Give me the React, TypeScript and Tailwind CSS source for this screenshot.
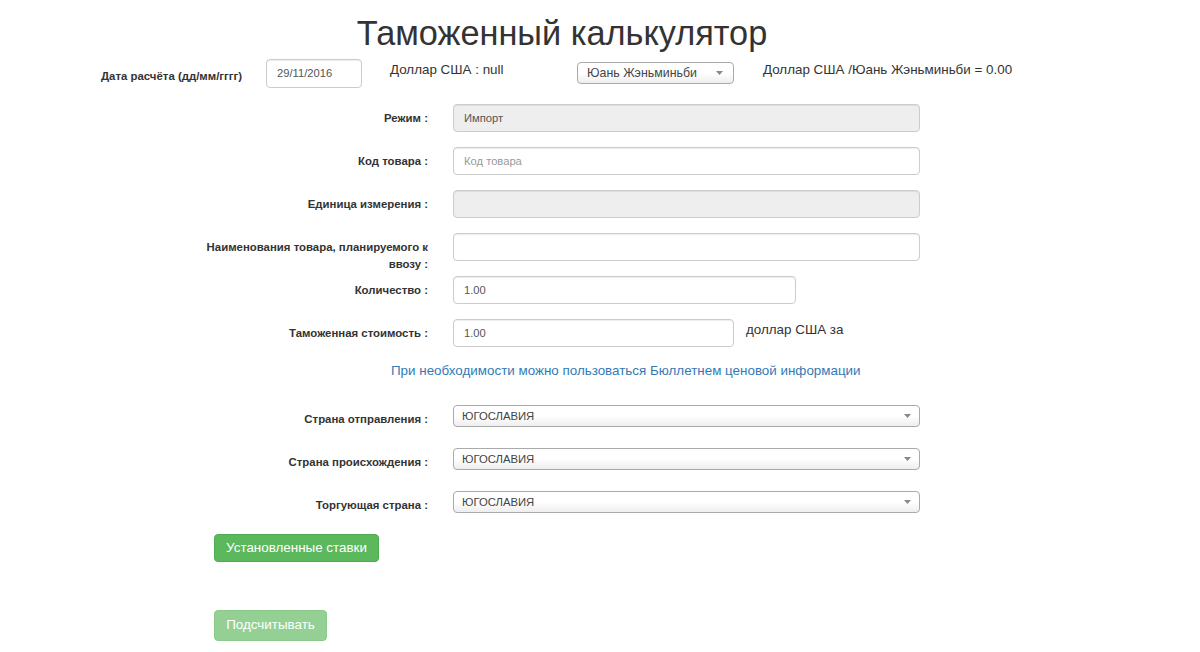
import React from 'react';

const Arrow = () => (
  <svg width="7" height="4" viewBox="0 0 7 4" className="shrink-0">
    <polygon points="0,0 7,0 3.5,4" fill="#888" />
  </svg>
);

const Field = ({ value = '', placeholder = '', disabled = false, className = '' }: any) => (
  <div
    className={`flex h-[28px] items-center rounded-[4px] border border-[#ccc] px-[10px] text-[11.2px] shadow-[inset_0_1px_1px_rgba(0,0,0,0.075)] ${
      disabled ? 'bg-[#eee]' : 'bg-white'
    } ${className}`}
  >
    {value ? <span className="text-[#555]">{value}</span> : <span className="text-[#999]">{placeholder}</span>}
  </div>
);

const Dropdown = ({ value, className = '' }: any) => (
  <div
    className={`flex h-[22px] items-center justify-between rounded-[4px] border border-[#aaa] bg-linear-to-b from-white from-50% to-[#eeeeee] pl-[8px] pr-[8px] text-[#444] ${className}`}
  >
    <span>{value}</span>
    <Arrow />
  </div>
);

const Row = ({ label, children, className = '' }: any) => (
  <div className={`flex items-start ${className}`}>
    <div className="ml-[198px] w-[230px] whitespace-nowrap pt-[6px] text-right text-[11.4px] font-bold leading-[17px] text-[#333]">
      {label}
    </div>
    <div className="ml-[25px] flex items-start">{children}</div>
  </div>
);

export default function App() {
  return (
    <div className="min-h-[652px] bg-white font-['Liberation_Sans',Arial,sans-serif] text-[#333]">
      <h1 className="w-[1124px] pt-[13px] text-center text-[34.3px] leading-[40px] font-normal text-[#333]">
        Таможенный калькулятор
      </h1>

      <div className="mt-[6px] flex items-start">
        <div className="ml-[101px] w-[165px] pt-[9px] text-[11.4px] font-bold leading-[17px]">
          Дата расчёта (дд/мм/гггг)
        </div>
        <Field value="29/11/2016" className="h-[29px] w-[96px]" />
        <div className="ml-[28px] w-[187px] pt-[1px] text-[13.4px] leading-[20px]">Доллар США : null</div>
        <Dropdown value="Юань Жэньминьби" className="mt-[3px] w-[157px] pl-[9px] pr-[10px] text-[12.4px]" />
        <div className="ml-[29px] pt-[1px] text-[13.4px] leading-[20px]">Доллар США /Юань Жэньминьби = 0.00</div>
      </div>

      <div className="mt-[16px] flex flex-col">
        <Row label="Режим :" className="mb-[15px]">
          <Field value="Импорт" disabled className="w-[467px]" />
        </Row>
        <Row label="Код товара :" className="mb-[15px]">
          <Field placeholder="Код товара" className="w-[467px]" />
        </Row>
        <Row label="Единица измерения :" className="mb-[15px]">
          <Field disabled className="w-[467px]" />
        </Row>
        <Row
          label={
            <>
              Наименования товара, планируемого к
              <br />
              ввозу :
            </>
          }
          className="mb-[3px]"
        >
          <Field className="w-[467px]" />
        </Row>
        <Row label="Количество :" className="mb-[15px]">
          <Field value="1.00" className="w-[343px]" />
        </Row>
        <Row label="Таможенная стоимость :">
          <Field value="1.00" className="w-[281px]" />
          <div className="ml-[12px] pt-[1px] text-[13.4px] leading-[20px] text-[#333]">доллар США за</div>
        </Row>
      </div>

      <div className="mt-[14px] pl-[391px] text-[13.4px] leading-[20px] text-[#337ab7]">
        При необходимости можно пользоваться Бюллетнем ценовой информации
      </div>

      <div className="mt-[24px] flex flex-col">
        <Row label="Страна отправления :" className="mb-[20px]">
          <Dropdown value="ЮГОСЛАВИЯ" className="w-[467px] text-[11.3px]" />
        </Row>
        <Row label="Страна происхождения :" className="mb-[20px]">
          <Dropdown value="ЮГОСЛАВИЯ" className="w-[467px] text-[11.3px]" />
        </Row>
        <Row label="Торгующая страна :">
          <Dropdown value="ЮГОСЛАВИЯ" className="w-[467px] text-[11.3px]" />
        </Row>
      </div>

      <div className="ml-[214px] mt-[20px] flex flex-col items-start">
        <button className="flex h-[28px] w-[165px] items-center justify-center rounded-[4px] border border-[#4cae4c] bg-[#5cb85c] text-[13.4px] text-white">
          Установленные ставки
        </button>
        <button className="mt-[48px] flex h-[31px] w-[113px] items-center justify-center rounded-[4px] border border-[#4cae4c] bg-[#5cb85c] text-[13.4px] text-white opacity-65">
          Подсчитывать
        </button>
      </div>
    </div>
  );
}
